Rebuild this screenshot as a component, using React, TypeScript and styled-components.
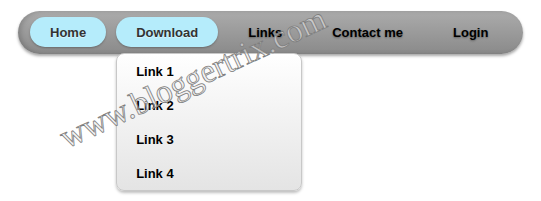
import styled, { createGlobalStyle } from 'styled-components';

const GlobalStyle = createGlobalStyle`
	body {
		margin: 0;
		background: #fff;
		font-family: 'Liberation Sans', Arial, sans-serif;
	}
`;

const Page = styled.div`
	position: relative;
	width: 541px;
	height: 201px;
	padding: 11px 18px 0;
	box-sizing: border-box;
	overflow: hidden;
`;

const NavBar = styled.ul`
	display: flex;
	gap: 10px;
	width: 505px;
	height: 43px;
	box-sizing: border-box;
	margin: 0;
	padding: 6px 13px 7px 12px;
	list-style: none;
	border-radius: 22px;
	background: linear-gradient(#ababab, #8a8a8a);
	box-shadow: 0 2px 3px rgba(0, 0, 0, 0.35), inset 3px 0 4px rgba(0, 0, 0, 0.15);
`;

const NavItem = styled.li<{ $active?: boolean }>`
	position: relative;
	display: flex;
	align-items: center;
	height: 30px;
	padding: 0 20px;
	border-radius: 15px;
	font-size: 13px;
	font-weight: bold;
	color: ${(p) => (p.$active ? '#333' : '#000')};
	background: ${(p) => (p.$active ? '#b5ecfb' : 'transparent')};
	text-shadow: ${(p) =>
		p.$active ? '0 1px 1px rgba(255,255,255,0.5)' : '0 1px 2px rgba(0,0,0,0.35)'};
	box-shadow: ${(p) => (p.$active ? '0 1px 2px rgba(0,0,0,0.25)' : 'none')};
	white-space: nowrap;
`;

const Dropdown = styled.ul`
	position: absolute;
	top: 36px;
	left: 0;
	width: 186px;
	box-sizing: border-box;
	margin: 0;
	padding: 0;
	list-style: none;
	border: 1px solid #c8c8c8;
	border-radius: 8px;
	background: linear-gradient(#ffffff, #e4e4e4);
	box-shadow: 0 2px 3px rgba(0, 0, 0, 0.25);
	z-index: 2;
`;

const DropdownItem = styled.li`
	display: flex;
	align-items: center;
	height: 34px;
	padding-left: 19px;
	font-size: 13px;
	font-weight: bold;
	color: #000;
	text-shadow: none;
`;

const Watermark = styled.div`
	position: absolute;
	left: 70px;
	top: 118px;
	height: 38px;
	line-height: 38px;
	font-family: 'Liberation Serif', 'Times New Roman', serif;
	font-size: 33px;
	color: rgba(235, 235, 235, 0.55);
	-webkit-text-stroke: 0.8px #7e7e7e;
	transform: rotate(-25deg);
	transform-origin: left bottom;
	white-space: nowrap;
	pointer-events: none;
	z-index: 3;
`;

const menu = ['Links', 'Contact me', 'Login'];
const links = ['Link 1', 'Link 2', 'Link 3', 'Link 4'];

const App = () => {
	return (
		<Page>
			<GlobalStyle />
			<NavBar>
				<NavItem $active>Home</NavItem>
				<NavItem $active>
					Download
					<Dropdown>
						{links.map((l) => (
							<DropdownItem key={l}>{l}</DropdownItem>
						))}
					</Dropdown>
				</NavItem>
				{menu.map((m) => (
					<NavItem key={m}>{m}</NavItem>
				))}
			</NavBar>
			<Watermark>www.bloggertrix.com</Watermark>
		</Page>
	);
};

export default App;
